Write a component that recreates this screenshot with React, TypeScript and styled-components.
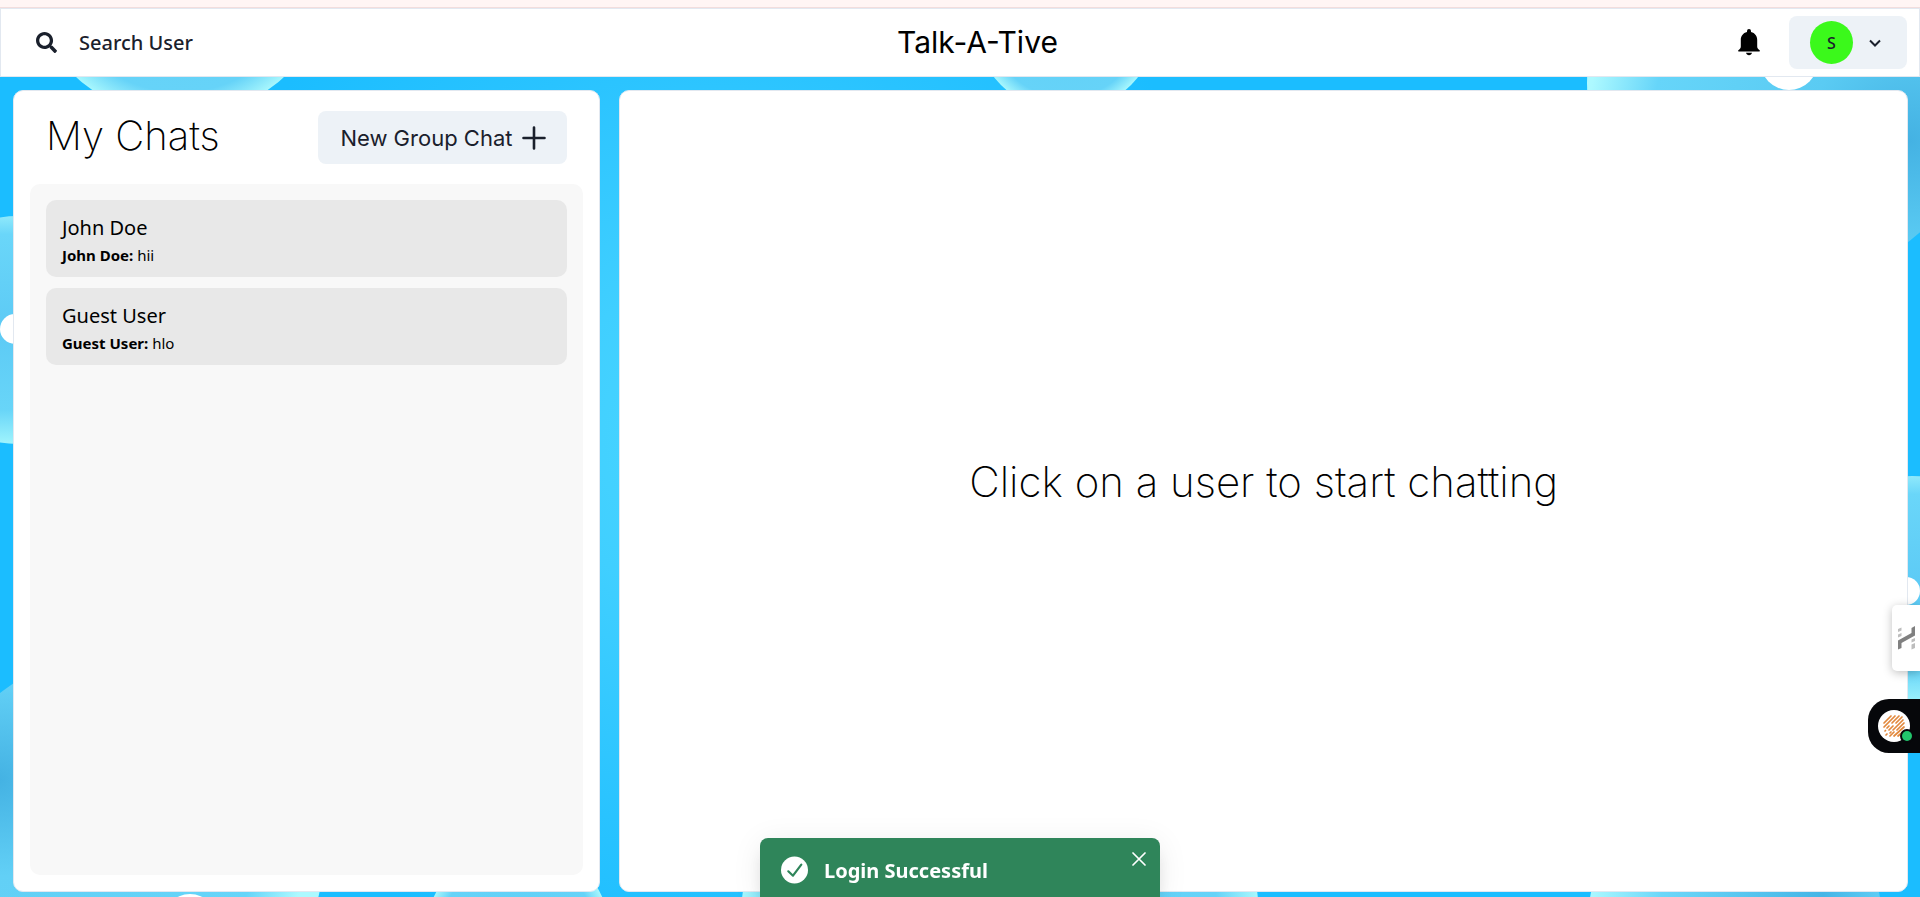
import React from 'react';
import styled, { createGlobalStyle } from 'styled-components';
import { FaSearch } from 'react-icons/fa';

const body = `'Noto Sans', 'Segoe UI', sans-serif`;
const display = `Inter, 'Work Sans', sans-serif`;

const GlobalStyle = createGlobalStyle`
  *, *::before, *::after { box-sizing: border-box; }
  body { margin: 0; font-family: ${body}; color: #000; background: #1bbdff; }
  h1, h2, p, ul { margin: 0; padding: 0; font-weight: inherit; }
  button { font: inherit; color: inherit; border: 0; padding: 0; background: none; cursor: pointer; }
  svg { display: block; }
`;

const Backdrop = styled.svg`
  position: fixed;
  inset: 0;
  z-index: -1;
  width: 100%;
  height: 100%;
`;

const Page = styled.div`
  min-height: 100vh;
  display: flex;
  flex-direction: column;
`;

const TopStrip = styled.div`
  height: 8px;
  background: #fff5f4;
  border-bottom: 1px solid #f2dddd;
`;

const Header = styled.header`
  display: flex;
  align-items: center;
  justify-content: space-between;
  padding: 7px 12px 7px 13px;
  background: #fff;
  border: 1px solid #e2e8f0;
`;

const SearchButton = styled.button`
  display: flex;
  align-items: center;
  gap: 22px;
  height: 50px;
  padding: 0 28px 0 22px;
  border-radius: 8px;
  font-size: 20px;
  line-height: 30px;
  font-weight: 500;
  color: #1a202c;
`;

const Brand = styled.h1`
  padding-bottom: 2px;
  font: 400 30px/40px ${display};
`;

const HeaderActions = styled.div`
  display: flex;
  align-items: center;
  gap: 25px;
`;

const BellButton = styled.button`
  padding: 4px;
`;

const ProfileButton = styled.button`
  display: flex;
  align-items: center;
  justify-content: space-between;
  width: 118px;
  height: 53px;
  padding: 0 26px 0 21px;
  border-radius: 8px;
  background: #edf2f7;
  color: #1a202c;
`;

const Avatar = styled.span`
  display: grid;
  place-items: center;
  width: 43px;
  height: 43px;
  border-radius: 50%;
  background: #3bf91b;
  font-size: 16px;
  font-weight: 500;
`;

const Main = styled.main`
  flex: 1;
  display: flex;
  justify-content: space-between;
  padding: 13px 12px 5px 13px;
`;

const Panel = styled.section`
  display: flex;
  flex-direction: column;
  background: #fff;
  border: 1px solid #e2e8f0;
  border-radius: 10px;
`;

const ChatsPanel = styled(Panel)`
  width: 31%;
  padding: 20px 16px 16px;
  gap: 20px;
`;

const ConversationPanel = styled(Panel)`
  width: 68%;
  align-items: center;
  justify-content: center;
`;

const PanelHeader = styled.div`
  display: flex;
  align-items: center;
  justify-content: space-between;
  padding: 0 16px;
`;

const PanelTitle = styled.h2`
  padding-bottom: 3px;
  font: 200 40px/50px ${display};
`;

const GroupButton = styled.button`
  display: flex;
  align-items: center;
  gap: 10px;
  height: 53px;
  padding: 0 21px 0 22px;
  border-radius: 8px;
  background: #edf2f7;
  color: #1a202c;
  font: 400 22px/30px ${display};
`;

const ChatList = styled.ul`
  flex: 1;
  display: flex;
  flex-direction: column;
  gap: 11px;
  padding: 16px;
  border-radius: 10px;
  background: #f8f8f8;
  list-style: none;
`;

const ChatItem = styled.button`
  display: block;
  width: 100%;
  height: 77px;
  padding: 2px 16px 0;
  border-radius: 10px;
  background: #e8e8e8;
  text-align: left;
`;

const ChatName = styled.p`
  font-size: 20px;
  line-height: 30px;
`;

const ChatPreview = styled.p`
  font-size: 15px;
  line-height: 24px;
`;

const Placeholder = styled.p`
  padding-bottom: 18px;
  font: 200 42px/60px ${display};
`;

const SideTab = styled.button`
  position: fixed;
  right: 0;
  top: 605px;
  display: flex;
  align-items: center;
  width: 28px;
  height: 66px;
  padding-left: 6px;
  border-radius: 5px 0 0 5px;
  background: #fff;
  box-shadow: 0 2px 10px rgba(0, 0, 0, 0.25);
`;

const RecorderTab = styled.button`
  position: fixed;
  right: 0;
  top: 699px;
  display: flex;
  align-items: center;
  width: 52px;
  height: 54px;
  padding-left: 10px;
  border-radius: 21px 0 0 21px;
  background: #06070a;
`;

const Toast = styled.div`
  position: fixed;
  left: 50%;
  bottom: 0;
  transform: translateX(-50%);
  display: flex;
  align-items: flex-start;
  gap: 16px;
  width: 400px;
  height: 59px;
  padding: 18px 14px 0 21px;
  border-radius: 8px 8px 0 0;
  background: #2f855a;
  color: #fff;
  box-shadow: 0 12px 18px -4px rgba(0, 0, 0, 0.12), 0 4px 30px rgba(0, 0, 0, 0.08);
`;

const ToastText = styled.p`
  flex: 1;
  font-size: 20px;
  line-height: 30px;
  font-weight: 700;
`;

const ToastClose = styled.button`
  margin-top: -4px;
`;

const blobs = [
  { cx: 180, cy: -39, r: 156, fill: 'bubble' },
  { cx: 1066, cy: 20, r: 92, fill: 'bubble' },
  { cx: 1787, cy: 83, r: 200, fill: 'cornerTop' },
  { cx: 18, cy: 330, r: 114, fill: 'sideBubble' },
  { cx: 124, cy: 850, r: 200, fill: 'cornerBottom' },
  { cx: 518, cy: 934, r: 92, fill: 'bubble' },
  { cx: 1000, cy: 922, r: 259, fill: 'bubble' },
  { cx: 1735, cy: 922, r: 147, fill: 'bottomRight' },
  { cx: 1912, cy: 590, r: 114, fill: 'sideBubble' },
];

const dots = [
  { cx: 1789, cy: 61, r: 29 },
  { cx: 15, cy: 329, r: 15 },
  { cx: 190, cy: 922, r: 28 },
  { cx: 1906, cy: 591, r: 14 },
];

function Wallpaper() {
  return (
    <Backdrop viewBox="0 0 1920 897" preserveAspectRatio="none" aria-hidden="true">
      <defs>
        <radialGradient id="sky" gradientUnits="userSpaceOnUse" cx="720" cy="440" r="560">
          <stop offset="0" stopColor="#4ad6ff" />
          <stop offset="0.3" stopColor="#40cfff" />
          <stop offset="0.7" stopColor="#29c3ff" />
          <stop offset="1" stopColor="#1bbdff" />
        </radialGradient>
        <radialGradient id="bubble">
          <stop offset="0" stopColor="#5fcff7" />
          <stop offset="0.84" stopColor="#66d3f8" />
          <stop offset="1" stopColor="#a8f7fd" />
        </radialGradient>
        <linearGradient id="sideBubble" x1="0" y1="0" x2="0" y2="1">
          <stop offset="0" stopColor="#8fe9fb" />
          <stop offset="0.08" stopColor="#6ad6f9" />
          <stop offset="0.5" stopColor="#5ccaf5" />
          <stop offset="0.85" stopColor="#68d5f8" />
          <stop offset="1" stopColor="#a0f4fd" />
        </linearGradient>
        <radialGradient id="cornerTop" gradientUnits="userSpaceOnUse" cx="1910" cy="140" r="323">
          <stop offset="0" stopColor="#44b2e3" />
          <stop offset="0.32" stopColor="#5acbf3" />
          <stop offset="0.8" stopColor="#66d5f9" />
          <stop offset="1" stopColor="#adf9ff" />
        </radialGradient>
        <radialGradient id="cornerBottom" gradientUnits="userSpaceOnUse" cx="0" cy="780" r="320">
          <stop offset="0" stopColor="#44b2e3" />
          <stop offset="0.3" stopColor="#62d0f6" />
          <stop offset="0.85" stopColor="#66d5f9" />
          <stop offset="1" stopColor="#adf9ff" />
        </radialGradient>
        <linearGradient id="bottomRight" x1="0" y1="0" x2="1" y2="0">
          <stop offset="0" stopColor="#adf9ff" />
          <stop offset="0.25" stopColor="#6cd7f9" />
          <stop offset="0.8" stopColor="#45b5e6" />
          <stop offset="1" stopColor="#60cdf5" />
        </linearGradient>
      </defs>
      <rect width="1920" height="897" fill="url(#sky)" />
      {blobs.map((b) => (
        <circle key={`${b.cx}-${b.cy}`} cx={b.cx} cy={b.cy} r={b.r} fill={`url(#${b.fill})`} />
      ))}
      {dots.map((d) => (
        <circle key={`${d.cx}-${d.cy}`} cx={d.cx} cy={d.cy} r={d.r} fill="#fff" />
      ))}
    </Backdrop>
  );
}

const BellIcon = () => (
  <svg width="22" height="27" viewBox="0 0 22 27" fill="currentColor" aria-hidden="true">
    <path d="M11 0a2 2 0 0 1 2 2v1c4 1 6.200 4 6.200 8v6.500c0 1.500.6 2.400 1.800 3.200.6.4.9.7.9 1.200 0 .300-.2.500-.6.500H.7c-.4 0-.6-.2-.6-.500 0-.5.300-.8.900-1.200 1.200-.8 1.800-1.700 1.800-3.200V11c0-4 2.200-7 6.200-8V2a2 2 0 0 1 2-2z" />
    <path d="M8 23.800h6c-.3 1.500-1.500 2.500-3 2.500s-2.700-1-3-2.500z" />
  </svg>
);

const ChevronIcon = () => (
  <svg width="12" height="8" viewBox="0 0 12 8" fill="none" stroke="currentColor" strokeWidth="2" aria-hidden="true">
    <path d="M1 1.500l5 5 5-5" />
  </svg>
);

const PlusIcon = () => (
  <svg width="24" height="24" viewBox="0 0 24 24" stroke="currentColor" strokeWidth="2.600" strokeLinecap="round" aria-hidden="true">
    <path d="M12 1.500v21M1.500 12h21" />
  </svg>
);

const CheckIcon = () => (
  <svg width="27" height="28" viewBox="0 0 27 28" fill="none" aria-hidden="true">
    <circle cx="13.500" cy="14" r="13.500" fill="#fff" />
    <path d="M7.300 15.300l4.700 4.400 8.300-11" stroke="#2f855a" strokeWidth="2.200" strokeLinecap="round" strokeLinejoin="round" />
  </svg>
);

const CloseIcon = () => (
  <svg width="14" height="14" viewBox="0 0 14 14" stroke="currentColor" strokeWidth="1.700" strokeLinecap="round" aria-hidden="true">
    <path d="M1 1l12 12M13 1L1 13" />
  </svg>
);

const SideLogo = () => (
  <svg width="17" height="24" viewBox="0 0 17 24" aria-hidden="true">
    <path d="M13.500 2L17 0v9.500L3.500 17v5L0 23.500V14.500l13.500-7.500z" fill="#808080" />
    <path d="M0 3l3.500-1.500v3L0 6zM0 8.500L3.500 7v3L0 11.500zM13.500 13.500L17 12v3l-3.500 1.500zM13.500 18.500L17 17v5L13.500 23.500z" fill="#bdbdbd" />
  </svg>
);

const RecorderLogo = () => (
  <svg width="36" height="36" viewBox="0 0 36 36" aria-hidden="true">
    <circle cx="16" cy="18" r="16" fill="#fff" />
    <g stroke="#e2883c" strokeWidth="1.700" strokeLinecap="round">
      <path d="M6 15l7-7M6 19L17 8M9 20l2-2M14 15l7-7M11 22l4-4M18 15l6-6M7 23l.5-.5M15 22l10-10M8 27l1-1M12 25l1-1M19 22l7-7M12 28l4-4M16 28l10-9M20 28l6-5" />
    </g>
    <circle cx="29" cy="28" r="7" fill="#06070a" />
    <circle cx="29" cy="28" r="5" fill="#22c56b" />
  </svg>
);

const chats = [
  { name: 'John Doe', message: 'hii' },
  { name: 'Guest User', message: 'hlo' },
];

export default function App() {
  return (
    <>
      <GlobalStyle />
      <Wallpaper />
      <Page>
        <TopStrip />
        <Header>
          <SearchButton type="button">
            <FaSearch size={21} aria-hidden="true" />
            Search User
          </SearchButton>
          <Brand>Talk-A-Tive</Brand>
          <HeaderActions>
            <BellButton type="button" aria-label="Notifications">
              <BellIcon />
            </BellButton>
            <ProfileButton type="button" aria-label="Account menu">
              <Avatar>S</Avatar>
              <ChevronIcon />
            </ProfileButton>
          </HeaderActions>
        </Header>
        <Main>
          <ChatsPanel>
            <PanelHeader>
              <PanelTitle>My Chats</PanelTitle>
              <GroupButton type="button">
                New Group Chat
                <PlusIcon />
              </GroupButton>
            </PanelHeader>
            <ChatList>
              {chats.map((chat) => (
                <li key={chat.name}>
                  <ChatItem type="button">
                    <ChatName>{chat.name}</ChatName>
                    <ChatPreview>
                      <b>{chat.name}:</b> {chat.message}
                    </ChatPreview>
                  </ChatItem>
                </li>
              ))}
            </ChatList>
          </ChatsPanel>
          <ConversationPanel>
            <Placeholder>Click on a user to start chatting</Placeholder>
          </ConversationPanel>
        </Main>
      </Page>
      <SideTab type="button" aria-label="Open side tool">
        <SideLogo />
      </SideTab>
      <RecorderTab type="button" aria-label="Open recorder">
        <RecorderLogo />
      </RecorderTab>
      <Toast role="status">
        <CheckIcon />
        <ToastText>Login Successful</ToastText>
        <ToastClose type="button" aria-label="Close">
          <CloseIcon />
        </ToastClose>
      </Toast>
    </>
  );
}
